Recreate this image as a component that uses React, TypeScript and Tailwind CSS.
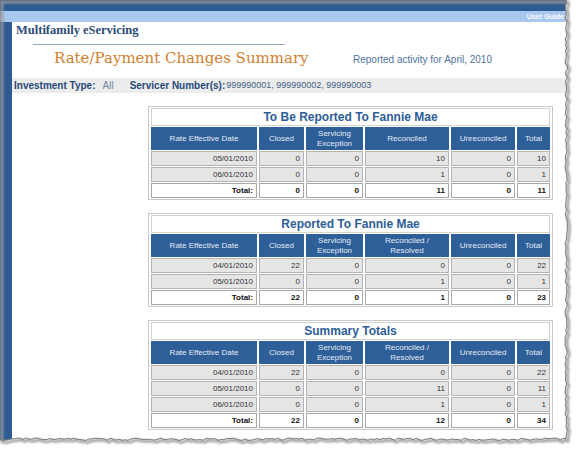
import React from "react";

type Row = { date: string; vals: number[] };

const sans = "font-['Liberation_Sans',Arial,sans-serif]";

function SummaryTable({
  title,
  recLabel,
  rows,
  total,
}: {
  title: string;
  recLabel: React.ReactNode;
  rows: Row[];
  total: number[];
}) {
  const head = "bg-[#2f5f98] text-[#e3ebf4] text-[8px] leading-[10px] font-normal text-center align-middle h-[23px] p-0";
  const cell = "bg-[#e5e5e5] border border-[#b3b3b3] text-[8px] text-[#333] text-right pr-[3px] h-[15px] p-0 leading-[13px]";
  const tot = "bg-white border border-[#a8a8a8] text-[8px] text-[#111] font-bold text-right pr-[3px] h-[15px] p-0 leading-[13px]";
  return (
    <table className={`ml-[136px] w-[404px] table-fixed border border-[#c9c9c9] border-separate border-spacing-x-[2px] border-spacing-y-[1px] ${sans}`}>
      <colgroup>
        <col className="w-[106px]" />
        <col className="w-[45px]" />
        <col className="w-[57px]" />
        <col className="w-[84px]" />
        <col className="w-[64px]" />
        <col className="w-[33px]" />
      </colgroup>
      <tbody>
        <tr>
          <td colSpan={6} className="border border-[#d2d2d2] bg-white h-[18px] p-0 text-center text-[12px] font-bold text-[#2d5d97] leading-[16px]">
            {title}
          </td>
        </tr>
        <tr>
          <th className={head}>Rate Effective Date</th>
          <th className={head}>Closed</th>
          <th className={head}>
            Servicing
            <br />
            Exception
          </th>
          <th className={head}>{recLabel}</th>
          <th className={head}>Unreconciled</th>
          <th className={head}>Total</th>
        </tr>
        {rows.map((r) => (
          <tr key={r.date}>
            <td className={cell}>{r.date}</td>
            {r.vals.map((v, i) => (
              <td key={i} className={cell}>
                {v}
              </td>
            ))}
          </tr>
        ))}
        <tr>
          <td className={tot}>Total:</td>
          {total.map((v, i) => (
            <td key={i} className={tot}>
              {v}
            </td>
          ))}
        </tr>
      </tbody>
    </table>
  );
}

// torn paper edge on the right and bottom
function TornEdge() {
  let seed = 7;
  const rnd = () => {
    seed = (seed * 9301 + 49297) % 233280;
    return seed / 233280;
  };
  const pts: string[] = [];
  for (let y = 0; y <= 440; y += 3) pts.push(`${566 + rnd() * 2.5 - 1},${y}`);
  for (let x = 566; x >= 0; x -= 3) pts.push(`${x},${439 + rnd() * 2.5 - 1}`);
  const paper = `M0,0 L${pts.join(" L")} L0,440 Z`;
  return (
    <svg className="absolute left-0 top-0 pointer-events-none" width="576" height="449">
      <defs>
        <filter id="blur" x="-10%" y="-10%" width="120%" height="120%">
          <feGaussianBlur stdDeviation="1.2" />
        </filter>
      </defs>
      <path d={`M0,0 H576 V449 H0 Z ${paper}`} fillRule="evenodd" fill="#ffffff" />
      <path d={paper} transform="translate(2,2)" fill="none" stroke="#9a9a9a" strokeWidth="2.5" filter="url(#blur)" />
      <path d={paper} fill="none" stroke="#7c7c7c" strokeWidth="1" />
    </svg>
  );
}

const reconciledResolved = (
  <>
    Reconciled /
    <br />
    Resolved
  </>
);

export default function App() {
  return (
    <div className="relative w-[576px] h-[449px] bg-white overflow-hidden">
      <div className="w-[566px] h-[440px] flex flex-col">
        <div className="h-[11px] shrink-0 bg-[#2c5b92] border-t border-[#1d4575]" />
        <div className={`h-[11px] shrink-0 bg-[#a9c8ef] flex justify-end items-center pr-[2px] ${sans}`}>
          <span className="text-[7px] font-bold text-white leading-[9px]">User Guide</span>
        </div>
        <div className="flex flex-1 min-h-0">
          <div className="w-[12px] shrink-0 bg-[#2d5b93]" />
          <div className="flex-1 flex flex-col">
            <div className="pl-[4px] h-[16px] shrink-0 font-['Liberation_Serif',serif] font-bold text-[12.5px] text-[#2c4a7a] leading-[16px]">
              Multifamily eServicing
            </div>
            <div className="ml-[21px] mt-[6px] w-[252px] h-px shrink-0 bg-[#93abc9]" />
            <div className="flex items-end h-[20px] mt-[3px] shrink-0">
              <div className="ml-[42px] w-[299px] font-['DejaVu_Serif',serif] text-[15px] text-[#d2812f] leading-[20px]">
                Rate/Payment Changes Summary
              </div>
              <div className={`${sans} text-[10px] text-[#4f73a0] leading-[16px]`}>Reported activity for April, 2010</div>
            </div>
            <div className={`mt-[10px] h-[15px] shrink-0 bg-[#ececec] flex items-center pl-[2px] ${sans}`}>
              <span className="text-[10px] font-bold text-[#27497a]">Investment Type:</span>
              <span className="ml-[7px] text-[10px] text-[#7189a9]">All</span>
              <span className="ml-[16px] text-[10px] font-bold text-[#27497a]">Servicer Number(s):</span>
              <span className="ml-[1px] text-[9px] text-[#425f85]">999990001, 999990002, 999990003</span>
            </div>
            <div className="mt-[13px] flex flex-col gap-[13px]">
              <SummaryTable
                title="To Be Reported To Fannie Mae"
                recLabel="Reconciled"
                rows={[
                  { date: "05/01/2010", vals: [0, 0, 10, 0, 10] },
                  { date: "06/01/2010", vals: [0, 0, 1, 0, 1] },
                ]}
                total={[0, 0, 11, 0, 11]}
              />
              <SummaryTable
                title="Reported To Fannie Mae"
                recLabel={reconciledResolved}
                rows={[
                  { date: "04/01/2010", vals: [22, 0, 0, 0, 22] },
                  { date: "05/01/2010", vals: [0, 0, 1, 0, 1] },
                ]}
                total={[22, 0, 1, 0, 23]}
              />
              <SummaryTable
                title="Summary Totals"
                recLabel={reconciledResolved}
                rows={[
                  { date: "04/01/2010", vals: [22, 0, 0, 0, 22] },
                  { date: "05/01/2010", vals: [0, 0, 11, 0, 11] },
                  { date: "06/01/2010", vals: [0, 0, 1, 0, 1] },
                ]}
                total={[22, 0, 12, 0, 34]}
              />
            </div>
          </div>
        </div>
      </div>
      <TornEdge />
    </div>
  );
}
